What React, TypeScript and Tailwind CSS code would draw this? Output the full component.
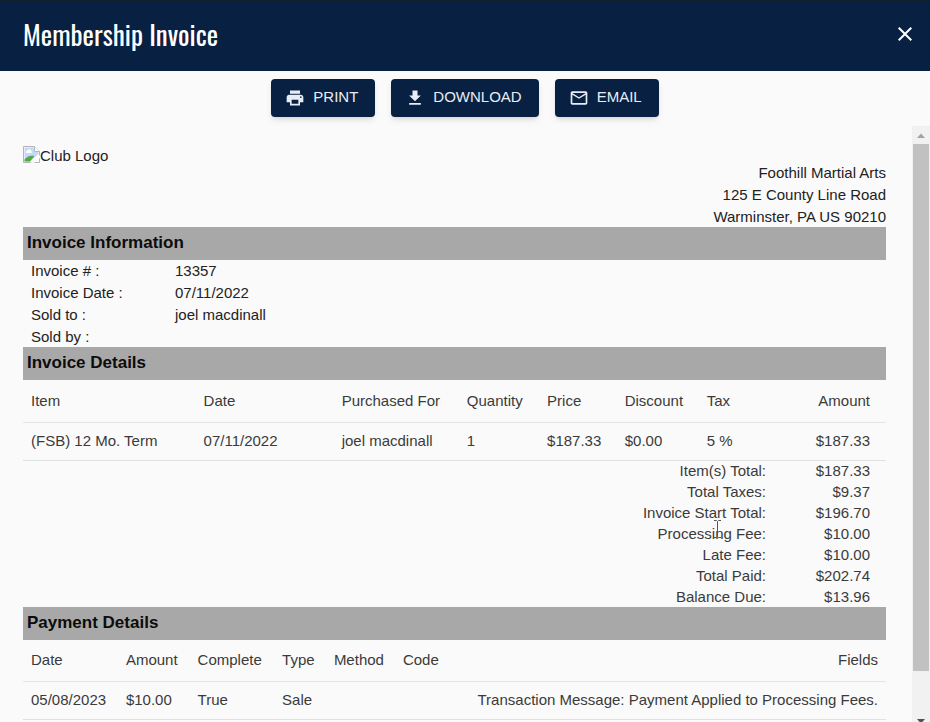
import { FC, ReactNode } from "react";
import { MdClose, MdFileDownload, MdMailOutline, MdPrint } from "react-icons/md";

const invoiceInfo = [
  { label: "Invoice # :", value: "13357" },
  { label: "Invoice Date :", value: "07/11/2022" },
  { label: "Sold to :", value: "joel macdinall" },
  { label: "Sold by :", value: "" },
];

const totals = [
  { label: "Item(s) Total:", value: "$187.33" },
  { label: "Total Taxes:", value: "$9.37" },
  { label: "Invoice Start Total:", value: "$196.70" },
  { label: "Processing Fee:", value: "$10.00" },
  { label: "Late Fee:", value: "$10.00" },
  { label: "Total Paid:", value: "$202.74" },
  { label: "Balance Due:", value: "$13.96" },
];

interface Column {
  title: string;
  width: string;
  className?: string;
}

const itemColumns: Column[] = [
  { title: "Item", width: "w-[20%]" },
  { title: "Date", width: "w-[16%]" },
  { title: "Purchased For", width: "w-[14.5%]" },
  { title: "Quantity", width: "w-[9.3%]" },
  { title: "Price", width: "w-[9%]" },
  { title: "Discount", width: "w-[9.5%]" },
  { title: "Tax", width: "w-[8%]" },
  { title: "Amount", width: "", className: "text-right pr-4" },
];

const paymentColumns: Column[] = [
  { title: "Date", width: "w-[11%]" },
  { title: "Amount", width: "w-[8.3%]" },
  { title: "Complete", width: "w-[9.8%]" },
  { title: "Type", width: "w-[6%]" },
  { title: "Method", width: "w-[8%]" },
  { title: "Code", width: "w-[7%]" },
  { title: "Fields", width: "", className: "text-right" },
];

const items = [
  ["(FSB) 12 Mo. Term", "07/11/2022", "joel macdinall", "1", "$187.33", "$0.00", "5 %", "$187.33"],
];

const payments = [
  [
    "05/08/2023",
    "$10.00",
    "True",
    "Sale",
    "",
    "",
    "Transaction Message: Payment Applied to Processing Fees.",
  ],
];

const ActionButton: FC<{ icon: ReactNode; children: ReactNode }> = ({ icon, children }) => (
  <button
    type="button"
    className="flex h-[38px] items-center gap-2 rounded bg-[#082041] pr-[17px] pb-px pl-3.5 text-[15px] text-[#e8edf5] shadow-md hover:bg-[#12305c]"
  >
    {icon}
    {children}
  </button>
);

const SectionTitle: FC<{ children: ReactNode }> = ({ children }) => (
  <h2 className="bg-[#a8a8a8] px-1 pt-[3px] pb-[5px] text-[17px] leading-[25px] font-bold text-[#0c0c0c]">
    {children}
  </h2>
);

const DataTable: FC<{ columns: Column[]; rows: string[][] }> = ({ columns, rows }) => (
  <table className="w-full table-fixed border-collapse text-left whitespace-nowrap text-[#3a3a3a]">
    <thead>
      <tr className="h-[42px] border-b border-[#e4e4e4]">
        {columns.map((column) => (
          <th
            key={column.title}
            scope="col"
            className={`px-2 font-normal ${column.width} ${column.className ?? ""}`}
          >
            {column.title}
          </th>
        ))}
      </tr>
    </thead>
    <tbody>
      {rows.map((row, rowIndex) => (
        <tr key={rowIndex} className="h-[38px] border-b border-[#e0e0e0]">
          {row.map((cell, index) => (
            <td key={index} className={`px-2 ${columns[index].className ?? ""}`}>
              {cell}
            </td>
          ))}
        </tr>
      ))}
    </tbody>
  </table>
);

const ClubLogo = () => (
  <div className="flex h-[18px] items-start text-[#222]">
    <svg width="17" height="17" viewBox="0 0 17 17" aria-hidden="true">
      <path d="M.5 .5H11.5L16.5 5.5V16.5H.5Z" fill="#fff" stroke="#b4b4b4" />
      <path d="M1.5 1.5H11V6H15.5V8L7 15.5H1.5Z" fill="#c4d8f8" />
      <path d="M3.5 7a1.6 1.6 0 0 1 1-2.8 2 2 0 0 1 3.6.6A1.2 1.2 0 0 1 8 7Z" fill="#fff" />
      <path d="M1.5 15.5V13.5C4 10.5 7 9 11.5 10L7 15.5Z" fill="#56a846" />
      <path d="M11.5 .5V5.5H16.5" fill="#fff" stroke="#b4b4b4" />
      <path d="M6.5 17.5L17.5 8.5V11.5L10.5 17.5Z" fill="#fafafa" />
    </svg>
    <span className="leading-5">Club Logo</span>
  </div>
);

const TextCursor = () => (
  <svg
    className="pointer-events-none absolute -top-1 right-11"
    width="9"
    height="18"
    viewBox="0 0 9 18"
    fill="none"
    stroke="#555"
    aria-hidden="true"
  >
    <path d="M1 .5H3.5L4.5 1.5L5.5 .5H8M4.5 1.5V16.5M1 17.5H3.5L4.5 16.5L5.5 17.5H8" />
  </svg>
);

const ScrollBar = () => (
  <div className="-mb-2 flex w-[18px] shrink-0 flex-col items-center bg-[#f1f1f1]" aria-hidden="true">
    <svg width="18" height="18" viewBox="0 0 18 18">
      <path d="M5 12L9 7.5L13 12Z" fill="#a3a3a3" />
    </svg>
    <div className="w-4 grow-[13] bg-[#c1c1c1]" />
    <div className="grow" />
    <svg width="18" height="18" viewBox="0 0 18 18">
      <path d="M5 7L9 11.5L13 7Z" fill="#505050" />
    </svg>
  </div>
);

const App: FC = () => {
  return (
    <div className="flex h-screen flex-col overflow-hidden bg-[#fafafa] font-['Liberation_Sans',Arial,sans-serif] text-[15px] text-[#222]">
      <header className="flex h-[71px] shrink-0 items-center justify-between border-t-2 border-[#10202d] bg-[#082041] pr-[13px] pb-[5px] pl-[23px] text-white">
        <h1 className="font-['Oswald','Roboto_Condensed','Liberation_Sans_Narrow',sans-serif] text-[27px] leading-8">
          Membership Invoice
        </h1>
        <button type="button" aria-label="Close">
          <MdClose size={24} />
        </button>
      </header>

      <div className="flex shrink-0 justify-center gap-4 pt-2 pb-[9px]">
        <ActionButton icon={<MdPrint size={20} />}>PRINT</ActionButton>
        <ActionButton icon={<MdFileDownload size={20} />}>DOWNLOAD</ActionButton>
        <ActionButton icon={<MdMailOutline size={20} />}>EMAIL</ActionButton>
      </div>

      <div className="flex min-h-0 grow">
        <main className="min-w-0 grow overflow-hidden pr-[26px] pl-[23px]">
          <div className="flex justify-between pt-5">
            <ClubLogo />
            <address className="flex flex-col gap-px pt-4 text-right leading-[21px] not-italic">
              <span>Foothill Martial Arts</span>
              <span>125 E County Line Road</span>
              <span>Warminster, PA US 90210</span>
            </address>
          </div>

          <SectionTitle>Invoice Information</SectionTitle>
          <dl className="flex flex-col gap-px px-2 leading-[21px]">
            {invoiceInfo.map((row) => (
              <div key={row.label} className="flex">
                <dt className="w-[17%]">{row.label}</dt>
                <dd>{row.value}</dd>
              </div>
            ))}
          </dl>

          <SectionTitle>Invoice Details</SectionTitle>
          <DataTable columns={itemColumns} rows={items} />
          <dl className="flex flex-col gap-px pr-4 text-right leading-5 text-[#3a3a3a]">
            {totals.map((row) => (
              <div key={row.label} className="flex justify-end">
                <dt className="relative">
                  {row.label}
                  {row.label === "Processing Fee:" && <TextCursor />}
                </dt>
                <dd className="w-[104px]">{row.value}</dd>
              </div>
            ))}
          </dl>

          <SectionTitle>Payment Details</SectionTitle>
          <DataTable columns={paymentColumns} rows={payments} />
        </main>
        <ScrollBar />
      </div>
    </div>
  );
};

export default App;
